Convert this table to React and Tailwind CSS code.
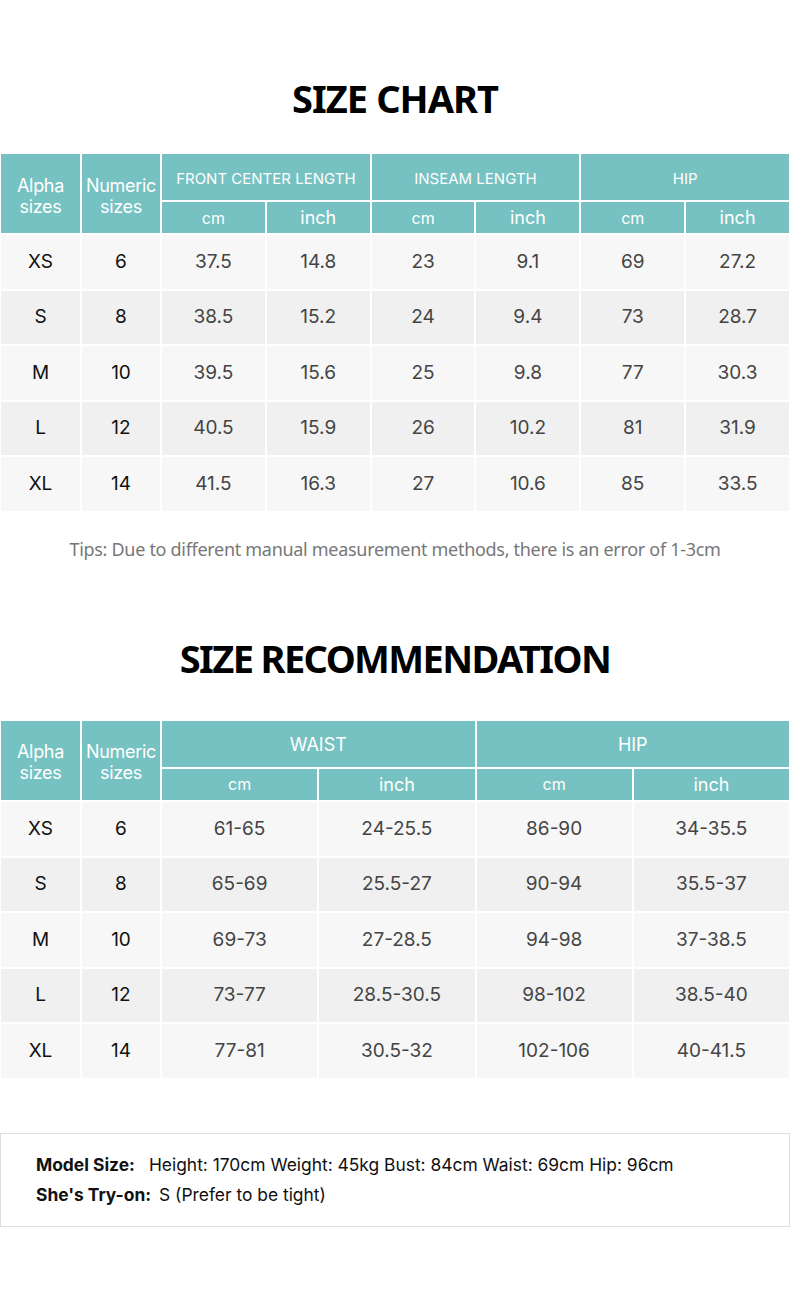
import React from 'react';

const chartRows = [
  ['XS', '6', '37.5', '14.8', '23', '9.1', '69', '27.2'],
  ['S', '8', '38.5', '15.2', '24', '9.4', '73', '28.7'],
  ['M', '10', '39.5', '15.6', '25', '9.8', '77', '30.3'],
  ['L', '12', '40.5', '15.9', '26', '10.2', '81', '31.9'],
  ['XL', '14', '41.5', '16.3', '27', '10.6', '85', '33.5'],
];

const recRows = [
  ['XS', '6', '61-65', '24-25.5', '86-90', '34-35.5'],
  ['S', '8', '65-69', '25.5-27', '90-94', '35.5-37'],
  ['M', '10', '69-73', '27-28.5', '94-98', '37-38.5'],
  ['L', '12', '73-77', '28.5-30.5', '98-102', '38.5-40'],
  ['XL', '14', '77-81', '30.5-32', '102-106', '40-41.5'],
];

const th = 'border-2 border-white bg-[#76c1c1] text-white font-normal text-center p-0';
const td = 'border-2 border-white text-center p-0 text-[19px]';

const SizeCell = ({ children }) => (
  <th rowSpan={2} className={`${th} pt-[4px] text-[18px] leading-[21px] tracking-[-0.3px]`}>{children}</th>
);

const DataRows = ({ rows }) =>
  rows.map((r, i) => (
    <tr key={r[0]} className={`h-[55.6px] ${i % 2 ? 'bg-[#f0f0f0]' : 'bg-[#f7f7f7]'}`}>
      {r.map((v, j) => (
        <td key={j} className={`${td} ${j < 2 ? 'text-[#111]' : 'text-[#444]'}`}>{v}</td>
      ))}
    </tr>
  ));

export default function App() {
  return (
    <div className="w-[790px] bg-white font-['Inter',sans-serif] pb-20">
      <h1 className="pt-[72px] pb-[28px] text-center text-[38px] leading-[52px] font-bold text-black tracking-tight font-['Noto_Sans',sans-serif]">
        SIZE CHART
      </h1>

      <table className="w-[792px] -ml-[1px] table-fixed border-collapse">
        <colgroup>
          <col className="w-[81px]" />
          <col className="w-[80px]" />
          <col /><col /><col /><col /><col /><col />
        </colgroup>
        <thead>
          <tr className="h-[48px]">
            <SizeCell>Alpha<br />sizes</SizeCell>
            <SizeCell>Numeric<br />sizes</SizeCell>
            <th colSpan={2} className={`${th} pt-[5px] text-[15px]`}>FRONT CENTER LENGTH</th>
            <th colSpan={2} className={`${th} pt-[5px] text-[15px]`}>INSEAM LENGTH</th>
            <th colSpan={2} className={`${th} pt-[5px] text-[15px]`}>HIP</th>
          </tr>
          <tr className="h-[33px]">
            {['cm', 'inch', 'cm', 'inch', 'cm', 'inch'].map((u, i) => (
              <th key={i} className={`${th} ${u === 'cm' ? 'text-[16px]' : 'text-[18px]'}`}>{u}</th>
            ))}
          </tr>
        </thead>
        <tbody>
          <DataRows rows={chartRows} />
        </tbody>
      </table>

      <p className="mt-[23px] text-center text-[18px] text-[#777] tracking-[-0.3px] font-['Noto_Sans',sans-serif]">
        Tips: Due to different manual measurement methods, there is an error of 1-3cm
      </p>

      <h2 className="pt-[69px] pb-[35px] text-center text-[38px] leading-[52px] font-bold text-black tracking-[-1.6px] font-['Noto_Sans',sans-serif]">
        SIZE RECOMMENDATION
      </h2>

      <table className="w-[792px] -ml-[1px] table-fixed border-collapse">
        <colgroup>
          <col className="w-[81px]" />
          <col className="w-[80px]" />
          <col /><col /><col /><col />
        </colgroup>
        <thead>
          <tr className="h-[48px]">
            <SizeCell>Alpha<br />sizes</SizeCell>
            <SizeCell>Numeric<br />sizes</SizeCell>
            <th colSpan={2} className={`${th} pt-[2px] text-[18px]`}>WAIST</th>
            <th colSpan={2} className={`${th} pt-[2px] text-[18px]`}>HIP</th>
          </tr>
          <tr className="h-[33px]">
            {['cm', 'inch', 'cm', 'inch'].map((u, i) => (
              <th key={i} className={`${th} ${u === 'cm' ? 'text-[16px]' : 'text-[18px]'}`}>{u}</th>
            ))}
          </tr>
        </thead>
        <tbody>
          <DataRows rows={recRows} />
        </tbody>
      </table>

      <div className="mt-[53px] border border-[#ddd] pl-[35px] py-[16px] text-[17.4px] leading-[30px] text-[#111]">
        <div>
          <span className="font-bold">Model Size:</span>
          <span className="ml-[14px]">Height: 170cm Weight: 45kg Bust: 84cm Waist: 69cm Hip: 96cm</span>
        </div>
        <div>
          <span className="font-bold">She's Try-on:</span>
          <span className="ml-[8px]">S (Prefer to be tight)</span>
        </div>
      </div>
    </div>
  );
}
